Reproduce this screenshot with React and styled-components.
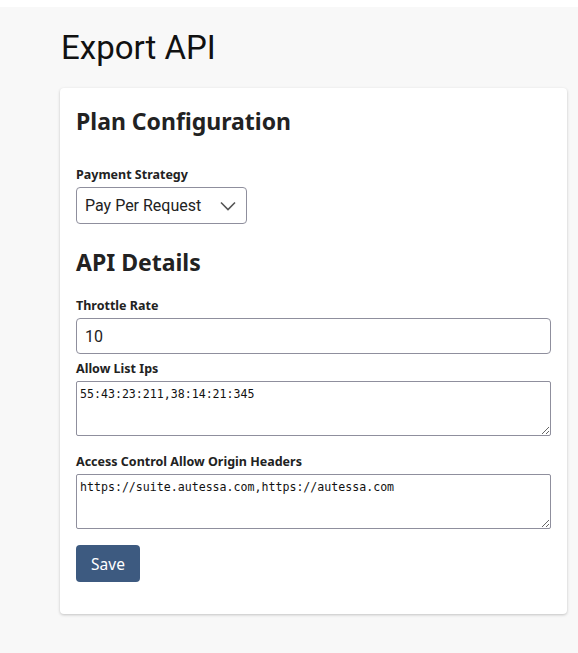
import React, { useState } from 'react';
import styled, { createGlobalStyle } from 'styled-components';

const GlobalStyle = createGlobalStyle`
  html, body {
    margin: 0;
    padding: 0;
    background: #ffffff;
  }
`;

const PageWrapper = styled.div`
  margin-top: 7px;
  min-height: 646px;
  background: #f8f8f8;
  padding: 24px 11px 40px 60px;
  box-sizing: border-box;
`;

const Title = styled.h1`
  font-family: Roboto, "Liberation Sans", sans-serif;
  font-size: 33px;
  font-weight: 400;
  color: #111;
  margin: 0 0 23px 1px;
  line-height: 34px;
`;

const Card = styled.div`
  background: #fff;
  border-radius: 4px;
  box-shadow: 0 1px 3px rgba(0, 0, 0, 0.22);
  padding: 16px 16px 32px 16px;
`;

const SectionTitle = styled.h2`
  font-family: "Noto Sans", "Open Sans", sans-serif;
  font-size: 23px;
  font-weight: 700;
  color: #222;
  margin: ${p => (p.$first ? '0' : '21px')} 0 0 0;
  line-height: 34px;
`;

const Field = styled.div`
  display: flex;
  flex-direction: column;
  align-items: flex-start;
  margin-top: ${p => p.$gap || 8}px;
`;

const Label = styled.label`
  font-family: "Noto Sans", "Open Sans", sans-serif;
  font-size: 12.5px;
  font-weight: 700;
  color: #222;
  line-height: 18px;
  margin-bottom: 3px;
`;

const SelectBox = styled.div`
  position: relative;
  width: 171px;
  height: 37px;
  box-sizing: border-box;
  border: 1px solid #8f8f9d;
  border-radius: 4px;
  display: flex;
  align-items: center;
  padding-left: 8px;
  font-family: Roboto, "Liberation Sans", sans-serif;
  font-size: 16px;
  color: #222;

  svg {
    position: absolute;
    right: 10px;
    top: 50%;
    transform: translateY(-50%);
  }
`;

const TextInput = styled.input`
  width: 100%;
  height: 36px;
  box-sizing: border-box;
  border: 1px solid #8f8f9d;
  border-radius: 4px;
  padding: 0 8px;
  font-family: Roboto, "Liberation Sans", sans-serif;
  font-size: 16px;
  color: #222;
  outline: none;
`;

const TextArea = styled.textarea`
  width: 100%;
  height: 55px;
  box-sizing: border-box;
  border: 1px solid #8f8f9d;
  border-radius: 2px;
  padding: 4px 3px 2px 3px;
  font-family: "DejaVu Sans Mono", "Liberation Mono", monospace;
  font-size: 11.6px;
  line-height: 16px;
  color: #111;
  resize: vertical;
  outline: none;
`;

const SaveButton = styled.button`
  margin-top: 16px;
  width: 64px;
  height: 37px;
  border: none;
  border-radius: 4px;
  background: #3d5a80;
  color: #fff;
  font-family: "Noto Sans", "Open Sans", sans-serif;
  font-size: 15.5px;
  cursor: pointer;
`;

const Chevron = () => (
  <svg width="16" height="10" viewBox="0 0 16 10" fill="none">
    <path d="M1 1.5 L8 8.5 L15 1.5" stroke="#555" strokeWidth="1.6" />
  </svg>
);

export default function App() {
  const [rate, setRate] = useState('10');
  const [ips, setIps] = useState('55:43:23:211,38:14:21:345');
  const [origins, setOrigins] = useState('https://suite.autessa.com,https://autessa.com');

  return (
    <>
      <GlobalStyle />
      <PageWrapper>
        <Title>Export API</Title>
        <Card>
          <SectionTitle $first>Plan Configuration</SectionTitle>
          <Field $gap={28}>
            <Label>Payment Strategy</Label>
            <SelectBox>
              Pay Per Request
              <Chevron />
            </SelectBox>
          </Field>

          <SectionTitle>API Details</SectionTitle>
          <Field $gap={18}>
            <Label>Throttle Rate</Label>
            <TextInput value={rate} onChange={e => setRate(e.target.value)} />
          </Field>
          <Field $gap={6}>
            <Label>Allow List Ips</Label>
            <TextArea value={ips} onChange={e => setIps(e.target.value)} />
          </Field>
          <Field $gap={17}>
            <Label>Access Control Allow Origin Headers</Label>
            <TextArea value={origins} onChange={e => setOrigins(e.target.value)} />
          </Field>
          <SaveButton>Save</SaveButton>
        </Card>
      </PageWrapper>
    </>
  );
}
